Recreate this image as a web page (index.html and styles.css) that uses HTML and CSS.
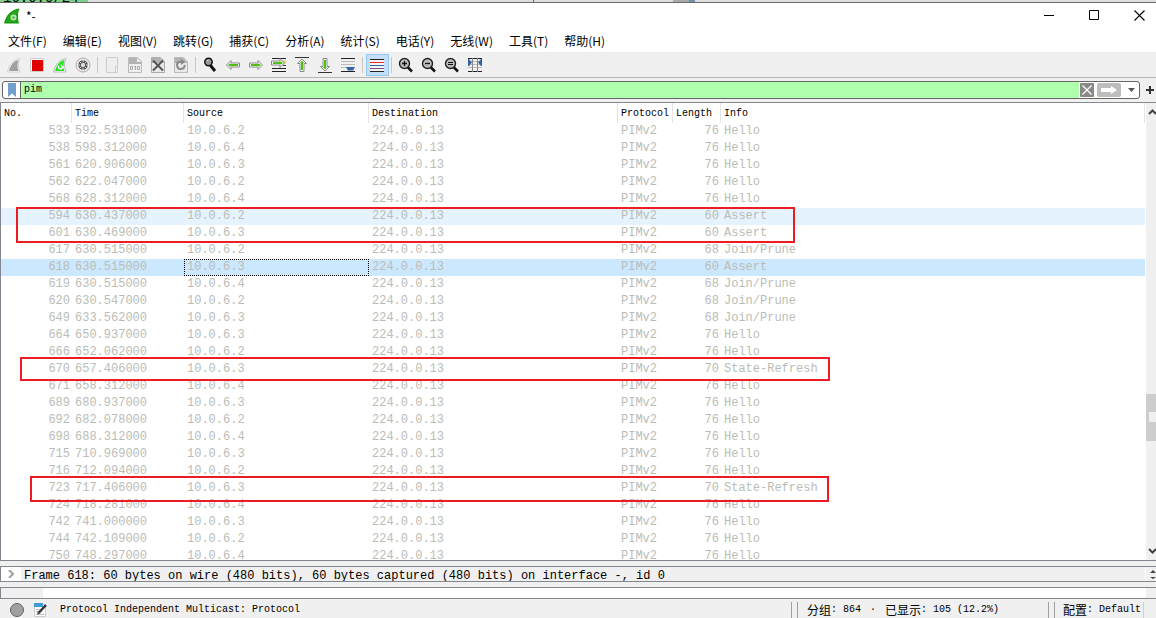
FILE: index.html
```html
<!DOCTYPE html>
<html lang="zh-CN">
<head>
<meta charset="utf-8">
<title>*-</title>
<link rel="stylesheet" href="styles.css">
</head>
<body>
<div class="backdrop"><span class="backdrop-text">16.0.0/24</span><span class="backdrop-mark"></span><span class="backdrop-tab"></span><span class="backdrop-pane"></span></div>
<header class="titlebar">
  <svg class="logo" width="16" height="16" viewBox="0 0 16 16"><path d="M0 15.500C2 7 7 1.500 15.500 .5C13.500 5 13.500 10 15 15.500Z" fill="#189a16"/><path d="M2 14C4 7 8 3 14 1.500C12 6 12 10 13.500 14Z" fill="#27a51c"/><circle cx="9.500" cy="9.500" r="3" fill="#b9e8ae"/><circle cx="9.500" cy="9.500" r="1.300" fill="#55ae4c"/></svg>
  <h1 class="title">*-</h1>
  <div class="window-controls">
    <button aria-label="最小化"><svg width="11" height="11" viewBox="0 0 11 11"><path d="M0 5.500H10" stroke="#000"/></svg></button>
    <button aria-label="最大化"><svg width="11" height="11" viewBox="0 0 11 11"><path d="M.5 .5H9.500V9.500H.5Z" fill="none" stroke="#000"/></svg></button>
    <button aria-label="关闭"><svg width="11" height="11" viewBox="0 0 11 11"><path d="M.5 .5L10.500 10.500M10.500 .5L.5 10.500" stroke="#000" stroke-width="1.100"/></svg></button>
  </div>
</header>
<nav class="menubar">
  <button>文件(F)</button><button>编辑(E)</button><button>视图(V)</button><button>跳转(G)</button><button>捕获(C)</button><button>分析(A)</button><button>统计(S)</button><button>电话(Y)</button><button>无线(W)</button><button>工具(T)</button><button>帮助(H)</button>
</nav>
<div class="toolbar">
  <button aria-label="开始捕获"><svg viewBox="0 0 16 16"><path d="M1.500 15C3 8 7 2.500 14 1.500C12 5 12 10 14 15Z" fill="#fff" stroke="#d0d0d0"/><path d="M3 14C4.500 8 7.500 4 12.500 3C11 7 11.500 11 12.500 14Z" fill="#a0a0a0"/></svg></button>
  <button aria-label="停止捕获"><svg viewBox="0 0 16 16"><path d="M1.500 1.500H14.500V14.500H1.500Z" fill="#fff" stroke="#ccc"/><path d="M3 3H14V14H3Z" fill="#e00000"/></svg></button>
  <button aria-label="重新开始捕获"><svg viewBox="0 0 16 16"><path d="M1.500 15C3 8 7 2.500 14 1.500C12 5 12 10 14 15Z" fill="#fff" stroke="#bbb"/><path d="M3 14C4.500 8 7.500 4 12.500 3C11 7 11.500 11 12.500 14Z" fill="#22e51b"/><path d="M6.500 8.500C5.500 13 11 13 11 9.500M9.500 7.500V10H12" fill="none" stroke="#fff" stroke-width="1.300"/></svg></button>
  <button aria-label="捕获选项"><svg viewBox="0 0 16 16"><circle cx="8" cy="8" r="7" fill="#eee" stroke="#aaa"/><circle cx="8" cy="8" r="4.800" fill="#555"/><circle cx="8" cy="8" r="2.200" fill="#ddd"/><path d="M8 3V5M8 11V13M3 8H5M11 8H13M4.500 4.500L6 6M10 10L11.500 11.500M4.500 11.500L6 10M10 6L11.500 4.500" stroke="#ddd"/></svg></button>
  <span class="separator"></span>
  <button aria-label="打开"><svg viewBox="0 0 16 16"><path d="M2.500 .5H13.500V15.500H2.500Z" fill="#eee" stroke="#ccc"/><path d="M11.500 9.500H13.500V15.500H11.500Z" fill="#eee" stroke="#ccc"/></svg></button>
  <button aria-label="保存"><svg viewBox="0 0 16 16"><path d="M1.500 .5H10.500L14.500 4.500V15.500H1.500Z" fill="#eee" stroke="#bbb"/><path d="M2 1H10L14 5V7H2Z" fill="#b2b2b2"/><path d="M10 1V5H14Z" fill="#eee"/><path d="M3.500 9.500H5.500V12.500H3.500ZM7 9.500H8.500M8.500 9V13M10.500 9.500H12.500V12.500H10.500Z" fill="none" stroke="#aaa"/></svg></button>
  <button aria-label="关闭文件"><svg viewBox="0 0 16 16"><path d="M1.500 .5H10.500L14.500 4.500V15.500H1.500Z" fill="#e8e8e8" stroke="#aaa"/><path d="M2 1H10L14 5V6H2Z" fill="#b2b2b2"/><path d="M3 3.500L13 13.500M13 3.500L3 13.500" stroke="#555" stroke-width="2"/></svg></button>
  <button aria-label="重新加载"><svg viewBox="0 0 16 16"><path d="M1.500 .5H10.500L14.500 4.500V15.500H1.500Z" fill="#e8e8e8" stroke="#bbb"/><path d="M2 1H10L14 5V6H2Z" fill="#b2b2b2"/><path d="M9 5H6C3 6 3.500 12 7.500 12C10.500 12 12 10 11.500 8" fill="none" stroke="#888" stroke-width="2"/><path d="M8 2V8L12 5Z" fill="#888"/></svg></button>
  <span class="separator"></span>
  <button aria-label="查找"><svg viewBox="0 0 16 16"><path d="M8.500 8.500L13 14" stroke="#111" stroke-width="3"/><circle cx="6.500" cy="5" r="3.700" fill="#999" stroke="#111" stroke-width="1.500"/><path d="M5 4L6.500 3" stroke="#ddd"/></svg></button>
  <button aria-label="后退"><svg viewBox="0 0 16 16"><path d="M1.500 8L6 3.500V6H14.500V10H6V12.500Z" fill="#fff" stroke="#888"/><path d="M3 8L5.500 6V7H13V9H5.500V10Z" fill="#4fbf10"/></svg></button>
  <button aria-label="前进"><svg viewBox="0 0 16 16"><path d="M14.500 8L10 3.500V6H1.500V10H10V12.500Z" fill="#fff" stroke="#888"/><path d="M13 8L10.500 6V7H3V9H10.500V10Z" fill="#4fbf10"/></svg></button>
  <button aria-label="转到分组"><svg viewBox="0 0 16 16"><path d="M1 1.500H15M1 11.500H15M1 14.500H15" stroke="#222"/><path d="M11 5H15" stroke="#eed44a" stroke-width="3"/><path d="M12 8.500H15" stroke="#333"/><path d="M13.500 6L9 1.500V4H.5V8H9V10.500Z" fill="#fff" stroke="#888"/><path d="M12 6L9.500 4V5H2V7H9.500V8Z" fill="#4fbf10"/></svg></button>
  <button aria-label="首个分组"><svg viewBox="0 0 16 16"><path d="M1 .5H15" stroke="#333"/><path d="M8 2L3.500 6.500H6V14.500H10V6.500H12.500Z" fill="#fff" stroke="#888"/><path d="M8 3.500L6 6H7V13H9V6H10Z" fill="#4fbf10"/></svg></button>
  <button aria-label="末个分组"><svg viewBox="0 0 16 16"><path d="M1 15.500H15" stroke="#333"/><path d="M8 14L3.500 9.500H6V1.500H10V9.500H12.500Z" fill="#fff" stroke="#888"/><path d="M8 12.500L6 10H7V3H9V10H10Z" fill="#4fbf10"/></svg></button>
  <button aria-label="自动滚动"><svg viewBox="0 0 16 16"><path d="M1 1.500H15M1 14.500H15" stroke="#222"/><path d="M1 4.500H15M1 7.500H15M1 10.500H15" stroke="#bbb"/><path d="M6 10H15L13 13.500H8Z" fill="#3465a4"/></svg></button>
  <span class="separator"></span>
  <button class="checked" aria-label="着色"><svg viewBox="0 0 16 16"><path d="M1 2H15V14H1Z" fill="#f4f4f4"/><path d="M1 2.500H15M1 14.500H15" stroke="#222"/><path d="M1 5.500H15" stroke="#ef2929"/><path d="M1 8.500H15" stroke="#3465a4"/><path d="M1 11.500H15" stroke="#75507b"/></svg></button>
  <span class="separator"></span>
  <button aria-label="放大"><svg viewBox="0 0 16 16"><path d="M9.500 10L14 14.500" stroke="#111" stroke-width="2.500"/><circle cx="6.500" cy="6.500" r="5" fill="#bbb" stroke="#222" stroke-width="1.400"/><path d="M4 6.500H9M6.500 4V9" stroke="#111" stroke-width="1.300"/></svg></button>
  <button aria-label="缩小"><svg viewBox="0 0 16 16"><path d="M9.500 10L14 14.500" stroke="#111" stroke-width="2.500"/><circle cx="6.500" cy="6.500" r="5" fill="#bbb" stroke="#222" stroke-width="1.400"/><path d="M4 6.500H9" stroke="#111" stroke-width="1.300"/></svg></button>
  <button aria-label="正常大小"><svg viewBox="0 0 16 16"><path d="M9.500 10L14 14.500" stroke="#111" stroke-width="2.500"/><circle cx="6.500" cy="6.500" r="5" fill="#bbb" stroke="#222" stroke-width="1.400"/><path d="M4 5.500H9M4 7.500H9" stroke="#111"/></svg></button>
  <button aria-label="调整列宽"><svg viewBox="0 0 16 16"><path d="M1 1.500H15M1 14.500H15" stroke="#222"/><path d="M1 4.500H15M1 7.500H15M1 10.500H15" stroke="#bbb"/><path d="M5.500 1V15M10.500 1V15" stroke="#888"/><path d="M1 2H2L5 5.500L2 9H1ZM15 2H14L11 5.500L14 9H15Z" fill="#3465a4"/></svg></button>
</div>
<form class="filterbar">
  <div class="filter">
    <button type="button" class="bookmark" aria-label="书签"><svg width="8" height="14" viewBox="0 0 8 14"><path d="M0 0H8V14L4 10.500L0 14Z" fill="#729fcf"/></svg></button>
    <input class="filter-input" type="text" value="pim" aria-label="显示过滤器">
    <button type="button" class="clear" aria-label="清除"><svg width="14" height="14" viewBox="0 0 14 14"><rect width="14" height="14" rx="1" fill="#888a85"/><path d="M2.500 2.500L11.500 11.500M11.500 2.500L2.500 11.500" stroke="#fff" stroke-width="1.300"/></svg></button>
    <button type="button" class="apply" aria-label="应用"><svg width="24" height="14" viewBox="0 0 24 14"><rect width="24" height="14" rx="2" fill="#bdbdbd"/><path d="M4 5H14V3L20 7L14 11V9H4Z" fill="#fff"/></svg></button>
    <button type="button" class="recent" aria-label="最近的过滤器"><svg width="7" height="4" viewBox="0 0 7 4"><path d="M0 0H7L3.500 4Z" fill="#555"/></svg></button>
  </div>
  <button type="button" class="add" aria-label="添加"><svg width="8" height="8" viewBox="0 0 8 8"><path d="M4 0V8M0 4H8" stroke="#333" stroke-width="2"/></svg></button>
</form>
<main class="packets">
  <div class="packet-view">
  <table class="packet-table">
    <colgroup><col class="c-no"><col class="c-time"><col class="c-source"><col class="c-dest"><col class="c-proto"><col class="c-len"><col></colgroup>
    <thead><tr><th>No.</th><th>Time</th><th>Source</th><th>Destination</th><th>Protocol</th><th>Length</th><th>Info</th></tr></thead>
    <tbody>
      <tr><td>533</td><td>592.531000</td><td>10.0.6.2</td><td>224.0.0.13</td><td>PIMv2</td><td>76</td><td>Hello</td></tr>
      <tr><td>538</td><td>598.312000</td><td>10.0.6.4</td><td>224.0.0.13</td><td>PIMv2</td><td>76</td><td>Hello</td></tr>
      <tr><td>561</td><td>620.906000</td><td>10.0.6.3</td><td>224.0.0.13</td><td>PIMv2</td><td>76</td><td>Hello</td></tr>
      <tr><td>562</td><td>622.047000</td><td>10.0.6.2</td><td>224.0.0.13</td><td>PIMv2</td><td>76</td><td>Hello</td></tr>
      <tr><td>568</td><td>628.312000</td><td>10.0.6.4</td><td>224.0.0.13</td><td>PIMv2</td><td>76</td><td>Hello</td></tr>
      <tr class="hovered"><td>594</td><td>630.437000</td><td>10.0.6.2</td><td>224.0.0.13</td><td>PIMv2</td><td>60</td><td>Assert</td></tr>
      <tr><td>601</td><td>630.469000</td><td>10.0.6.3</td><td>224.0.0.13</td><td>PIMv2</td><td>60</td><td>Assert</td></tr>
      <tr><td>617</td><td>630.515000</td><td>10.0.6.2</td><td>224.0.0.13</td><td>PIMv2</td><td>68</td><td>Join/Prune</td></tr>
      <tr class="selected"><td>618</td><td>630.515000</td><td class="focused">10.0.6.3</td><td>224.0.0.13</td><td>PIMv2</td><td>60</td><td>Assert</td></tr>
      <tr><td>619</td><td>630.515000</td><td>10.0.6.4</td><td>224.0.0.13</td><td>PIMv2</td><td>68</td><td>Join/Prune</td></tr>
      <tr><td>620</td><td>630.547000</td><td>10.0.6.2</td><td>224.0.0.13</td><td>PIMv2</td><td>68</td><td>Join/Prune</td></tr>
      <tr><td>649</td><td>633.562000</td><td>10.0.6.3</td><td>224.0.0.13</td><td>PIMv2</td><td>68</td><td>Join/Prune</td></tr>
      <tr><td>664</td><td>650.937000</td><td>10.0.6.3</td><td>224.0.0.13</td><td>PIMv2</td><td>76</td><td>Hello</td></tr>
      <tr><td>666</td><td>652.062000</td><td>10.0.6.2</td><td>224.0.0.13</td><td>PIMv2</td><td>76</td><td>Hello</td></tr>
      <tr><td>670</td><td>657.406000</td><td>10.0.6.3</td><td>224.0.0.13</td><td>PIMv2</td><td>70</td><td>State-Refresh</td></tr>
      <tr><td>671</td><td>658.312000</td><td>10.0.6.4</td><td>224.0.0.13</td><td>PIMv2</td><td>76</td><td>Hello</td></tr>
      <tr><td>689</td><td>680.937000</td><td>10.0.6.3</td><td>224.0.0.13</td><td>PIMv2</td><td>76</td><td>Hello</td></tr>
      <tr><td>692</td><td>682.078000</td><td>10.0.6.2</td><td>224.0.0.13</td><td>PIMv2</td><td>76</td><td>Hello</td></tr>
      <tr><td>698</td><td>688.312000</td><td>10.0.6.4</td><td>224.0.0.13</td><td>PIMv2</td><td>76</td><td>Hello</td></tr>
      <tr><td>715</td><td>710.969000</td><td>10.0.6.3</td><td>224.0.0.13</td><td>PIMv2</td><td>76</td><td>Hello</td></tr>
      <tr><td>716</td><td>712.094000</td><td>10.0.6.2</td><td>224.0.0.13</td><td>PIMv2</td><td>76</td><td>Hello</td></tr>
      <tr><td>723</td><td>717.406000</td><td>10.0.6.3</td><td>224.0.0.13</td><td>PIMv2</td><td>70</td><td>State-Refresh</td></tr>
      <tr><td>724</td><td>718.281000</td><td>10.0.6.4</td><td>224.0.0.13</td><td>PIMv2</td><td>76</td><td>Hello</td></tr>
      <tr><td>742</td><td>741.000000</td><td>10.0.6.3</td><td>224.0.0.13</td><td>PIMv2</td><td>76</td><td>Hello</td></tr>
      <tr><td>744</td><td>742.109000</td><td>10.0.6.2</td><td>224.0.0.13</td><td>PIMv2</td><td>76</td><td>Hello</td></tr>
      <tr><td>750</td><td>748.297000</td><td>10.0.6.4</td><td>224.0.0.13</td><td>PIMv2</td><td>76</td><td>Hello</td></tr>
    </tbody>
  </table>
  </div>
  <div class="scrollbar">
    <svg width="8" height="6" viewBox="0 0 8 6"><path d="M1 5L4.500 1.500L8 5" fill="none" stroke="#444" stroke-width="2"/></svg>
    <div class="scroll-track"><div class="scroll-thumb"><span class="scroll-grip"></span></div></div>
    <svg width="8" height="6" viewBox="0 0 8 6"><path d="M1 1L4.500 4.500L8 1" fill="none" stroke="#444" stroke-width="2"/></svg>
  </div>
  <div class="mark mark-assert"></div>
  <div class="mark mark-refresh-a"></div>
  <div class="mark mark-refresh-b"></div>
</main>
<section class="details">
  <div class="details-row"><svg width="6" height="8" viewBox="0 0 6 8"><path d="M1 0L5 4L1 8" fill="none" stroke="#a0a0a0" stroke-width="2"/></svg></div>
  <p class="details-text">Frame 618: 60 bytes on wire (480 bits), 60 bytes captured (480 bits) on interface -, id 0</p>
  <div class="details-scroll"><svg width="7" height="13" viewBox="0 0 7 13"><path d="M1 6H7L4 3ZM1 10L4 12L7 10" fill="#444"/></svg></div>
</section>
<section class="bytes"><div class="bytes-offset"></div><div class="bytes-scroll"></div></section>
<footer class="statusbar">
  <div class="status-main">
    <svg width="16" height="16" viewBox="0 0 16 16"><circle cx="8" cy="8" r="6.500" fill="#a0a19e" stroke="#626262"/></svg>
    <svg width="16" height="16" viewBox="0 0 16 16"><path d="M1.500 2.500H12.500V14.500H1.500Z" fill="#fff" stroke="#ccc"/><path d="M1 1H10V5H1Z" fill="#3d9dd6"/><path d="M3 7.500H7M3 9.500H6M3 12.500H11" stroke="#bbb"/><path d="M6 10.500L13 3" stroke="#333" stroke-width="2.500"/><path d="M4 12.500L5 9L7.500 11.500Z" fill="#444"/></svg>
    <span class="status-text">Protocol Independent Multicast: Protocol</span>
  </div>
  <div class="status-count"><span class="cjk">分组</span>: 864<span class="dot">·</span><span class="cjk">已显示</span>: 105 (12.2%)</div>
  <div class="status-profile"><span class="cjk">配置</span>: Default</div>
  <div class="status-end"></div>
</footer>
</body>
</html>
```
FILE: styles.css
```css
* { box-sizing: border-box; }
body {
  margin: 0;
  height: 100vh;
  display: flex;
  flex-direction: column;
  overflow: hidden;
  background: #f0f0f0;
  color: #000;
  font: 10px/16px "Liberation Mono", "Noto Sans CJK SC", monospace;
}
button { padding: 0; border: 0; background: none; color: inherit; font: inherit; }
svg { display: block; flex: none; }
.backdrop {
  flex: none;
  height: 3px;
  display: flex;
  overflow: hidden;
  background: #dedede;
  border-bottom: 1px solid #6a6a6a;
}
.backdrop-text {
  width: 88px;
  height: 16px;
  margin-top: -10px;
  padding-left: 3px;
  background: #7fd08a;
  font-size: 14px;
}
.backdrop-mark { width: 1px; margin-left: 445px; background: #2f6fb5; }
.backdrop-tab { width: 16px; margin-left: 139px; background: #aaa; }
.backdrop-pane { width: 6px; background: #6f8fae; }
.titlebar {
  flex: none;
  height: 25px;
  display: flex;
  align-items: center;
  padding-left: 4px;
  gap: 6px;
  background: #fff;
}
.title { flex: 1; margin: 0; font: 12px/16px "Noto Sans CJK SC", sans-serif; }
.window-controls { display: flex; }
.window-controls button { width: 45px; height: 25px; padding-left: 17px; }
.window-controls button:last-child { width: 39px; }
.menubar {
  flex: none;
  height: 25px;
  display: flex;
  padding: 1px 0 0 8px;
  gap: 16px;
  background: #fff;
  border-bottom: 1px solid #ececec;
  font: 12px/24px "Noto Sans CJK SC", sans-serif;
}
.toolbar {
  flex: none;
  height: 25px;
  display: flex;
  align-items: center;
  padding-left: 3px;
  border-bottom: 1px solid #b5b5b5;
}
.toolbar button {
  width: 23px;
  height: 22px;
  display: flex;
  align-items: center;
  padding-left: 2px;
  border: 1px solid transparent;
}
.toolbar svg { width: 16px; height: 16px; }
.toolbar .checked { border-color: #90c8f6; background: #c3def5; }
.separator { width: 2px; height: 16px; margin: 0 2px; border-left: 1px solid #c8c8c8; }
.filterbar {
  flex: none;
  height: 24px;
  display: flex;
  align-items: center;
  padding: 0 2px;
  gap: 6px;
}
.filter {
  flex: 1;
  height: 18px;
  display: flex;
  align-items: center;
  border: 1px solid #666;
  border-radius: 3px;
  background: #fff;
  overflow: hidden;
}
.bookmark { width: 18px; height: 16px; display: grid; place-items: center; border-right: 1px solid #666; }
.filter-input {
  flex: 1;
  min-width: 0;
  height: 16px;
  padding: 0 3px;
  border: 0;
  border-radius: 0;
  outline: 0;
  background: #afffaf;
  color: #000;
  font: inherit;
}
.clear { margin: 0 3px 0 1px; }
.recent { width: 18px; display: grid; place-items: center; padding-left: 3px; }
.packets {
  position: relative;
  flex: 1;
  min-height: 0;
  display: flex;
  border: 1px solid #828790;
  border-right: 0;
  background: #fff;
}
.packet-view { flex: 1; min-width: 0; overflow: hidden; }
.packet-table { width: 100%; table-layout: fixed; border-collapse: separate; border-spacing: 0; }
.c-no { width: 71px; }
.c-time { width: 112px; }
.c-source { width: 185px; }
.c-dest { width: 249px; }
.c-proto { width: 55px; }
.c-len { width: 48px; }
.packet-table th {
  height: 20px;
  padding: 1px 0 0 3px;
  border-right: 1px solid #e5e5e5;
  text-align: left;
  font-weight: 400;
}
.packet-table td {
  height: 17px;
  padding: 0 3px;
  color: #babdb6;
  font-size: 12px;
  line-height: 17px;
  white-space: nowrap;
}
.packet-table td:first-child, .packet-table td:nth-child(6) { text-align: right; padding-right: 2px; }
.hovered { background: #e5f3ff; }
.selected { background: #cce8ff; }
.packet-table .focused { outline: 1px dotted #000; outline-offset: -1px; }
.scrollbar {
  flex: none;
  width: 11px;
  display: flex;
  flex-direction: column;
  align-items: flex-end;
  padding: 6px 0;
  border-left: 1px solid #fff;
  background: #f0f0f0;
}
.scroll-track { flex: 1; align-self: stretch; display: grid; grid-template-rows: 278fr 47fr 107fr; }
.scroll-thumb { grid-row: 2; display: flex; align-items: center; justify-content: flex-end; background: #cdcdcd; }
.scroll-grip { width: 7px; height: 10px; background: #f0f0f0; }
.mark { position: absolute; border: 2px solid #ed1c24; pointer-events: none; }
.mark-assert { left: 15px; top: 104px; width: 779px; height: 36px; }
.mark-refresh-a { left: 19px; top: 254px; width: 810px; height: 24px; }
.mark-refresh-b { left: 29px; top: 373px; width: 799px; height: 26px; }
.details {
  flex: none;
  height: 16px;
  display: flex;
  margin-top: 5px;
  border: 1px solid #828790;
  border-right: 0;
  overflow: hidden;
}
.details-row { width: 20px; display: grid; place-items: center; background: #fff; }
.details-text { flex: 1; margin: 0; padding-left: 3px; font-size: 12px; line-height: 18px; white-space: nowrap; }
.details-scroll { width: 11px; display: flex; justify-content: flex-end; border-left: 1px solid #fff; }
.bytes {
  flex: none;
  height: 12px;
  display: flex;
  justify-content: space-between;
  margin-top: 5px;
  border: 1px solid #828790;
  border-right: 0;
  background: #fff;
}
.bytes-offset { width: 42px; background: #f0f0f0; }
.bytes-scroll { width: 10px; background: #f0f0f0; }
.statusbar { flex: none; height: 19px; display: flex; padding-top: 3px; }
.statusbar > div { display: flex; align-items: center; white-space: nowrap; }
.status-main { flex: 1; padding-left: 9px; gap: 8px; }
.status-text { padding-left: 3px; }
.status-count { width: 257px; }
.status-profile { width: 96px; border-right: 1px solid #d0d0d0; }
.status-count::before, .status-profile::before {
  content: "";
  align-self: stretch;
  width: 5px;
  margin-right: 9px;
  border: solid #a0a0a0;
  border-width: 0 1px;
}
.status-profile::before { margin-right: 8px; }
.status-end { width: 12px; }
.cjk { font: 12px/16px "Noto Sans CJK SC", sans-serif; }
.dot { width: 24px; text-align: center; }
```
